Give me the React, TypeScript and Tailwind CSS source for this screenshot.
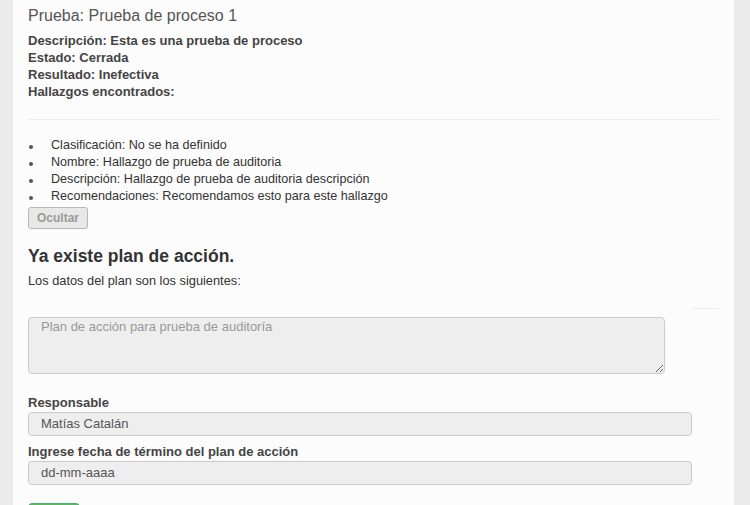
export default function App() {
  const hallazgo = [
    "Clasificación: No se ha definido",
    "Nombre: Hallazgo de prueba de auditoria",
    "Descripción: Hallazgo de prueba de auditoria descripción",
    "Recomendaciones: Recomendamos esto para este hallazgo",
  ]

  return (
    <div className="min-h-[505px] h-[505px] overflow-hidden bg-[#ebebeb] font-['Liberation_Sans',Arial,sans-serif] text-[#333]">
      <div className="ml-[13px] w-[721px] h-full bg-[#fcfcfc] pl-[15px] pr-[15px] pt-[5px]">
        <h3 className="text-[16px] leading-[22px] text-[#555]">Prueba: Prueba de proceso 1</h3>

        <div className="mt-[5px] text-[13px] leading-[17px] font-bold text-[#444]">
          <p>Descripción: Esta es una prueba de proceso</p>
          <p>Estado: Cerrada</p>
          <p>Resultado: Inefectiva</p>
          <p>Hallazgos encontrados:</p>
        </div>

        <hr className="mt-[19px] border-t border-[#eeeeee]" />

        <ul className="mt-[17px] text-[12.6px] leading-[17px] text-[#333]">
          {hallazgo.map((item) => (
            <li key={item} className="flex items-center">
              <span className="ml-[1px] mr-[18px] mt-[2px] size-[4px] rounded-full bg-[#555]" />
              {item}
            </li>
          ))}
        </ul>

        <button className="mt-[1px] h-[22px] w-[60px] rounded-[3px] border border-[#b8b8b8] bg-[#e8e8e8] text-[12px] font-bold text-[#999]">
          Ocultar
        </button>

        <h4 className="mt-[17px] text-[17.5px] leading-[20px] font-bold text-[#333]">Ya existe plan de acción.</h4>
        <p className="mt-[6px] text-[12.8px] leading-[18px] text-[#333]">Los datos del plan son los siguientes:</p>

        <div className="mt-[18px] flex justify-end">
          <div className="w-[28px] border-t border-[#eeeeee]" />
        </div>

        <textarea
          readOnly
          disabled
          placeholder="Plan de acción para prueba de auditoría"
          className="mt-[8px] block h-[57px] w-[637px] resize-y rounded-[4px] border border-[#cccccc] bg-[#eeeeee] px-[12px] pt-0 text-[13px] leading-[18px] text-[#555] placeholder:text-[#999]"
        />

        <label className="mt-[20px] block text-[13px] leading-[17px] font-bold text-[#444]">Responsable</label>
        <div className="mt-[1px] flex h-[24px] w-[664px] items-center rounded-[4px] border border-[#cccccc] bg-[#eeeeee] px-[12px] text-[13px] text-[#555]">
          Matías Catalán
        </div>

        <label className="mt-[7px] block text-[13px] leading-[17px] font-bold text-[#444]">
          Ingrese fecha de término del plan de acción
        </label>
        <div className="mt-[1px] flex h-[24px] w-[664px] items-center rounded-[4px] border border-[#cccccc] bg-[#eeeeee] px-[12px] text-[13px] text-[#555]">
          dd-mm-aaaa
        </div>

        <div className="mt-[18px] h-[24px] w-[52px] rounded-[4px] border border-[#4cae7a] bg-[#5cb85c]" />
      </div>
    </div>
  )
}
